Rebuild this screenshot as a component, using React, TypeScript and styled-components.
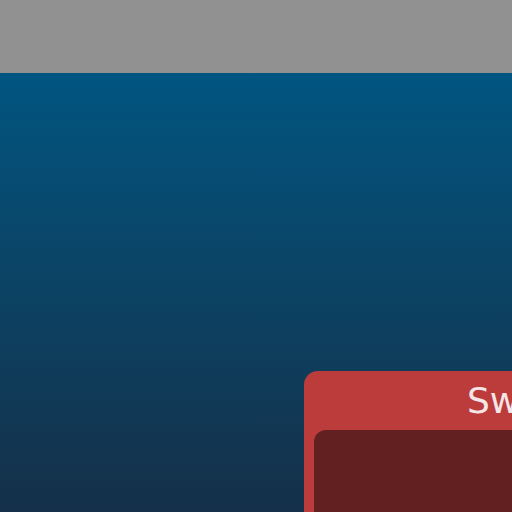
import React from "react";
import styled, { createGlobalStyle } from "styled-components";

const Global = createGlobalStyle`
  html, body { margin: 0; padding: 0; width: 512px; height: 512px; overflow: hidden; }
  #root { width: 512px; height: 512px; }
`;

const Page = styled.div`
  display: flex;
  flex-direction: column;
  width: 512px;
  height: 512px;
  overflow: hidden;
`;

const TopBar = styled.div`
  height: 73px;
  flex: none;
  background: #919191;
`;

const Stage = styled.div`
  flex: 1;
  background: linear-gradient(180deg, #015581 0%, #0b4466 45%, #153049 100%);
  padding: 298px 0 0 304px;
  overflow: hidden;
`;

const Card = styled.div`
  width: 700px;
  height: 300px;
  background: #bc3b3b;
  border-radius: 14px 14px 0 0;
  padding: 0 0 0 10px;
  box-sizing: border-box;
`;

const CardTitle = styled.div`
  height: 59px;
  display: flex;
  align-items: center;
  padding-left: 153px;
  color: #f4e6e6;
  font-family: "DejaVu Sans", "Verdana", sans-serif;
  font-size: 36px;
  line-height: 1;
  white-space: nowrap;
`;

const Inner = styled.div`
  height: 200px;
  background: #632020;
  border-radius: 12px 0 0 0;
`;

export default function App() {
  return (
    <>
      <Global />
      <Page>
        <TopBar />
        <Stage>
          <Card>
            <CardTitle>Swatches</CardTitle>
            <Inner />
          </Card>
        </Stage>
      </Page>
    </>
  );
}
